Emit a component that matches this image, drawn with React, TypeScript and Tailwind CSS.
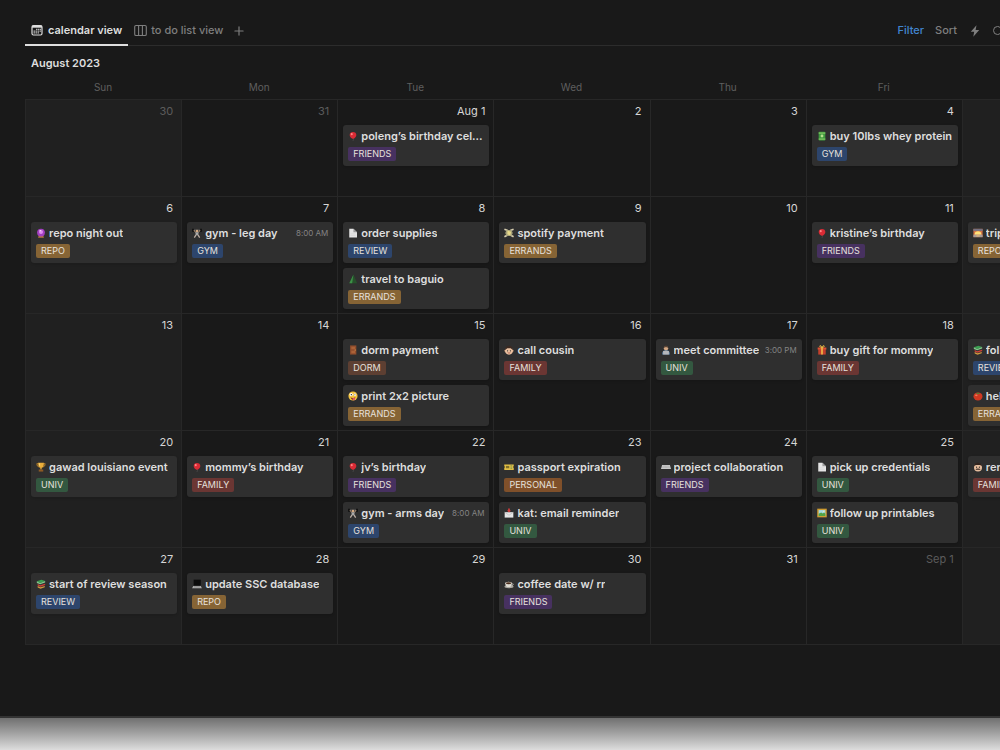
import React from "react";
import { Plus, Search } from "lucide-react";

type Tag =
  | "FRIENDS"
  | "GYM"
  | "REPO"
  | "REVIEW"
  | "ERRANDS"
  | "DORM"
  | "FAMILY"
  | "UNIV"
  | "PERSONAL";

interface CalendarEvent {
  icon: string;
  title: string;
  tag: Tag;
  time?: string;
}

interface Day {
  label: string;
  muted?: boolean;
  events?: CalendarEvent[];
}

const tagColors: Record<Tag, string> = {
  FRIENDS: "bg-[#473160]",
  GYM: "bg-[#2d456c]",
  REPO: "bg-[#866435]",
  REVIEW: "bg-[#2d456c]",
  ERRANDS: "bg-[#866435]",
  DORM: "bg-[#5d3f32]",
  FAMILY: "bg-[#6b3633]",
  UNIV: "bg-[#335840]",
  PERSONAL: "bg-[#80502a]",
};

const icons: Record<string, React.ReactNode> = {
  balloon: (
    <>
      <path d="M6 8.500q1 1.500 0 3.500" stroke="#666" strokeWidth=".5" fill="none" />
      <path d="M6 1.200c-2.500 0-4 1.600-4 3.600C2 7 4 8.800 5.700 9.300h.8C8.200 8.600 10 6.800 10 4.800 10 2.600 8.400 1.200 6 1.200z" fill="#d92b35" />
      <ellipse cx="4.500" cy="3.800" rx="1.200" ry="1.300" fill="#ff8585" />
    </>
  ),
  whey: (
    <>
      <rect x="2" y=".8" width="8" height="10.700" rx="1" fill="#3f9a3f" />
      <path d="M2 2.500h8M2 9.700h8" stroke="#8fd06c" strokeWidth="1.200" />
      <circle cx="6" cy="6" r="1.700" fill="#b6e08c" />
    </>
  ),
  crystal: (
    <>
      <path d="M2.500 11.700l1-3.200h5l1 3.200z" fill="#b7793c" />
      <circle cx="6" cy="5.500" r="4.700" fill="#a13fc0" />
      <circle cx="6" cy="4.800" r="2.400" fill="#dd8df0" />
      <circle cx="5" cy="3.200" r=".8" fill="#fff" />
    </>
  ),
  lifter: (
    <>
      <path d="M1 2.500h10" stroke="#777" strokeWidth=".8" />
      <path d="M1.200.8v3.700M10.800.8v3.700" stroke="#0c0c0c" strokeWidth="2" />
      <path d="M2.300 2.500l2.200 3M9.700 2.500l-2.200 3" stroke="#b89678" strokeWidth="1.200" />
      <circle cx="6" cy="3.500" r="1.500" fill="#d6ab83" />
      <path d="M4.100 5h3.800l-.4 3.700h-3z" fill="#a9a9a9" />
      <path d="M4.800 8.300L2.800 11.500M7.200 8.300l2 3.200" stroke="#bcaea4" strokeWidth="1.500" />
    </>
  ),
  page: (
    <>
      <path d="M1.500.8h5L10.800 5v6.500H1.500z" fill="#e4e4e4" />
      <path d="M6.500.8V5h4.300z" fill="#9c9c9c" />
      <path d="M3 7h6M3 9h6" stroke="#d4d4d4" strokeWidth=".7" />
    </>
  ),
  tree: (
    <>
      <path d="M6.500.5L11 11H2.500z" fill="#26502b" />
      <path d="M6.500.5L5 11H1.500z" fill="#3c9146" />
    </>
  ),
  money: (
    <>
      <path d="M.5 1.500l4 1.500M11.500 1.500l-4 1.500M.5 10.500l4-2M11.500 10.500l-4-2" stroke="#d8cfb0" strokeWidth="2" />
      <path d="M3 2.500h6l1.500 3.500L9 9.500H3L1.500 6z" fill="#a8a37a" />
      <path d="M4.200 3l4.300 1.500L7.500 9 4 7.500z" fill="#e8d989" />
    </>
  ),
  sunrise: (
    <>
      <rect x=".5" y="1" width="11" height="10" fill="#d57246" />
      <path d="M.5 3.500V1h11v2.500z" fill="#767282" />
      <path d="M2 8a4 4 0 018 0z" fill="#ffe277" />
      <path d="M.5 8h11v3H.5z" fill="#a79b98" />
      <path d="M4 9.500h4" stroke="#ffc260" />
    </>
  ),
  door: (
    <>
      <rect x="2.500" y=".5" width="7.500" height="11" fill="#904d2c" />
      <path d="M4 2h4.500v3H4zM4 7h4.500v3H4z" fill="#ab6238" />
      <circle cx="8.600" cy="6.100" r=".6" fill="#e9bd62" />
    </>
  ),
  zany: (
    <>
      <circle cx="6" cy="6" r="5.500" fill="#f4c33d" />
      <circle cx="3.800" cy="4.300" r="1.900" fill="#fff" />
      <circle cx="8.300" cy="4.600" r="1.500" fill="#fff" />
      <circle cx="4" cy="4.400" r=".8" fill="#222" />
      <circle cx="8.300" cy="4.600" r=".6" fill="#222" />
      <path d="M3 7.500q3 2 6-.3-.4 3.300-2.700 3.600T3 7.500z" fill="#8b3e19" />
      <path d="M5.500 8.800l2.500-.5.500 2.300-2 .8z" fill="#e9557a" />
    </>
  ),
  kid: (
    <>
      <circle cx="1.800" cy="7" r="1.300" fill="#dca682" />
      <circle cx="10.200" cy="7" r="1.300" fill="#dca682" />
      <circle cx="6" cy="7" r="4.600" fill="#ebc1a0" />
      <path d="M1.300 6C1.300 2.500 3.500 1 6 1s4.700 1.500 4.700 5L8 4H4z" fill="#3b2a22" />
      <circle cx="4.300" cy="7" r=".7" fill="#222" />
      <circle cx="7.700" cy="7" r=".7" fill="#222" />
      <path d="M4.500 9.200q1.500 1.200 3 0" stroke="#a84c3f" strokeWidth=".9" fill="none" />
    </>
  ),
  mustache: (
    <>
      <circle cx="6" cy="6.700" r="4.800" fill="#e5bd9e" />
      <path d="M1.300 5.200C1.400 2 3.700.8 6 .8S10.600 2 10.700 5.200L8.500 3.500h-5z" fill="#31241e" />
      <circle cx="4.300" cy="6.200" r=".7" fill="#222" />
      <circle cx="7.700" cy="6.200" r=".7" fill="#222" />
      <path d="M3 9.400Q4.500 7.200 6 8.200q1.500-1 3 1.200z" fill="#382720" />
    </>
  ),
  office: (
    <>
      <path d="M1.200 11.500c0-4 2-5.500 4.800-5.500s4.800 1.500 4.800 5.500z" fill="#587da0" />
      <circle cx="6" cy="4" r="2.600" fill="#d4a884" />
      <path d="M3.200 4C3.200 1.500 4.500 1 6 1s2.800.5 2.800 3L7.500 2.800h-3z" fill="#5a4334" />
      <rect x="2.500" y="7.200" width="7" height="4.300" fill="#b5b7bb" />
    </>
  ),
  gift: (
    <>
      <rect x="1.500" y="5" width="9" height="6.500" fill="#c4402b" />
      <rect x=".8" y="3" width="10.400" height="2.500" fill="#df5132" />
      <path d="M5 3h2v8.500H5z" fill="#edba47" />
      <path d="M6 3C3.500 3 2.500.8 4 .8S6 3 6 3s.5-2.200 2-2.200S8.500 3 6 3z" fill="none" stroke="#edba47" strokeWidth="1.200" />
    </>
  ),
  books: (
    <>
      <path d="M1 2.800L6.500 1l4.500 1.500-6 2.300z" fill="#3ba052" />
      <path d="M1 2.800v2l4 1.500 6-2V2.500L5 4.800z" fill="#85c78d" />
      <path d="M2 6l3 1.500L11 5.700v1.500L5.500 9.200 2 7.700z" fill="#cf4138" />
      <path d="M2 8.500l3.500 1.500L10.500 8.500V10l-5 1.700L2 10.200z" fill="#cf983e" />
    </>
  ),
  tomato: (
    <>
      <ellipse cx="6" cy="6.500" rx="5.400" ry="4.800" fill="#cf3922" />
      <ellipse cx="4" cy="5.200" rx="1.600" ry="1" fill="#f17b59" />
      <path d="M3.500 2.500l1.700.2L6 1.500l.8 1.200 1.700-.2-1.200 1.500L6 3.600l-1.300.4z" fill="#4c8436" />
    </>
  ),
  trophy: (
    <>
      <path d="M2.500 2H1q0 3.500 2.500 4M9.500 2H11q0 3.500-2.500 4" stroke="#cb8c27" fill="none" />
      <path d="M2.500.8h7Q9.500 6.500 6.800 7v2H5.200V7Q2.500 6.500 2.500.8z" fill="#e9ad3a" />
      <rect x="3.300" y="9" width="5.400" height="2.500" fill="#8c5924" />
      <path d="M4.300 1.500v3" stroke="#ffe290" />
    </>
  ),
  ticket: (
    <>
      <path d="M.3 3h11.400v2.200a.8.800 0 000 1.600V9.500H.3V6.800a.8.800 0 000-1.600z" fill="#e2bf45" />
      <path d="M2.300 4.700h4v2.800h-4z" fill="#7e6e29" />
      <path d="M7.800 4.500h2M7.800 6.200h2M7.800 7.900h2" stroke="#5f8c57" strokeWidth=".8" />
    </>
  ),
  mail: (
    <>
      <path d="M.8 5h10.400v6.500H.8z" fill="#e6e6e6" />
      <path d="M.8 5L6 8.700 11.200 5" stroke="#b5b5b5" strokeWidth=".7" fill="none" />
      <path d="M5 .5h2v2.500h1.500L6 5.500 3.500 3H5z" fill="#d93c3c" />
    </>
  ),
  keyboard: (
    <>
      <path d="M1.300 3.500h9.400l1.300 5H0z" fill="#c9c9c9" />
      <path d="M2 5h8M1.700 6.500h8.600" stroke="#9a9a9a" strokeWidth=".7" strokeDasharray="1 .5" />
    </>
  ),
  frame: (
    <>
      <rect x=".3" y=".8" width="11.400" height="10.400" fill="#cf9d32" />
      <rect x="2" y="2.500" width="8" height="7" fill="#a5d9e3" />
      <path d="M2 9.500V7l3-1.500 2 1L8.500 5.500 10 7v2.500z" fill="#50a345" />
      <circle cx="8" cy="4" r=".8" fill="#fff3a8" />
    </>
  ),
  laptop: (
    <>
      <path d="M2 .8h8.500v7H2z" fill="#0b0b0b" />
      <path d="M1.500 8.500h9l1.300 2.700H.2z" fill="#b9b9b9" />
      <path d="M2 9.500h8" stroke="#555" strokeWidth=".7" />
    </>
  ),
  coffee: (
    <>
      <ellipse cx="6" cy="9.300" rx="5.500" ry="1.700" fill="#a9a69f" />
      <path d="M1.500 5.200h8q0 3.800-2.500 4.500H4Q1.500 9 1.500 5.200z" fill="#dedbd3" />
      <path d="M9.500 5.700q2.200-.2 1.500 1.300-.6 1-2 1" stroke="#dedbd3" fill="none" strokeWidth=".8" />
      <ellipse cx="5.500" cy="5" rx="4" ry="1.800" fill="#dedbd3" />
      <ellipse cx="5.500" cy="5.100" rx="3.200" ry="1.200" fill="#4b2d1c" />
    </>
  ),
};

const weekdays = ["Sun", "Mon", "Tue", "Wed", "Thu", "Fri", "Sat"];

const weeks: Day[][] = [
  [
    { label: "30", muted: true },
    { label: "31", muted: true },
    {
      label: "Aug 1",
      events: [{ icon: "balloon", title: "poleng’s birthday celebration", tag: "FRIENDS" }],
    },
    { label: "2" },
    { label: "3" },
    { label: "4", events: [{ icon: "whey", title: "buy 10lbs whey protein", tag: "GYM" }] },
    { label: "5" },
  ],
  [
    { label: "6", events: [{ icon: "crystal", title: "repo night out", tag: "REPO" }] },
    {
      label: "7",
      events: [{ icon: "lifter", title: "gym - leg day", tag: "GYM", time: "8:00 AM" }],
    },
    {
      label: "8",
      events: [
        { icon: "page", title: "order supplies", tag: "REVIEW" },
        { icon: "tree", title: "travel to baguio", tag: "ERRANDS" },
      ],
    },
    { label: "9", events: [{ icon: "money", title: "spotify payment", tag: "ERRANDS" }] },
    { label: "10" },
    { label: "11", events: [{ icon: "balloon", title: "kristine’s birthday", tag: "FRIENDS" }] },
    { label: "12", events: [{ icon: "sunrise", title: "trip", tag: "REPO" }] },
  ],
  [
    { label: "13" },
    { label: "14" },
    {
      label: "15",
      events: [
        { icon: "door", title: "dorm payment", tag: "DORM" },
        { icon: "zany", title: "print 2x2 picture", tag: "ERRANDS" },
      ],
    },
    { label: "16", events: [{ icon: "kid", title: "call cousin", tag: "FAMILY" }] },
    {
      label: "17",
      events: [{ icon: "office", title: "meet committee", tag: "UNIV", time: "3:00 PM" }],
    },
    { label: "18", events: [{ icon: "gift", title: "buy gift for mommy", tag: "FAMILY" }] },
    {
      label: "19",
      events: [
        { icon: "books", title: "follow up", tag: "REVIEW" },
        { icon: "tomato", title: "help", tag: "ERRANDS" },
      ],
    },
  ],
  [
    { label: "20", events: [{ icon: "trophy", title: "gawad louisiano event", tag: "UNIV" }] },
    { label: "21", events: [{ icon: "balloon", title: "mommy’s birthday", tag: "FAMILY" }] },
    {
      label: "22",
      events: [
        { icon: "balloon", title: "jv’s birthday", tag: "FRIENDS" },
        { icon: "lifter", title: "gym - arms day", tag: "GYM", time: "8:00 AM" },
      ],
    },
    {
      label: "23",
      events: [
        { icon: "ticket", title: "passport expiration", tag: "PERSONAL" },
        { icon: "mail", title: "kat: email reminder", tag: "UNIV" },
      ],
    },
    { label: "24", events: [{ icon: "keyboard", title: "project collaboration", tag: "FRIENDS" }] },
    {
      label: "25",
      events: [
        { icon: "page", title: "pick up credentials", tag: "UNIV" },
        { icon: "frame", title: "follow up printables", tag: "UNIV" },
      ],
    },
    { label: "26", events: [{ icon: "mustache", title: "rent", tag: "FAMILY" }] },
  ],
  [
    { label: "27", events: [{ icon: "books", title: "start of review season", tag: "REVIEW" }] },
    { label: "28", events: [{ icon: "laptop", title: "update SSC database", tag: "REPO" }] },
    { label: "29" },
    { label: "30", events: [{ icon: "coffee", title: "coffee date w/ rr", tag: "FRIENDS" }] },
    { label: "31" },
    { label: "Sep 1", muted: true },
    { label: "2", muted: true },
  ],
];

const EventCard: React.FC<{ event: CalendarEvent }> = ({ event }) => (
  <article className="h-[41px] rounded-[3px] bg-[#2f2f2f] px-[5px] pt-[3px] shadow-sm">
    <div className="flex h-4 items-center">
      <svg className="mr-[3px] size-[10px] shrink-0" viewBox="0 0 12 12">
        {icons[event.icon]}
      </svg>
      <h3 className="truncate text-[11px] leading-4 font-semibold text-[#dedede]">{event.title}</h3>
      {event.time && (
        <time className="ml-auto shrink-0 text-[8px] text-[#848484]">{event.time}</time>
      )}
    </div>
    <span
      className={`mt-[3px] block h-[14px] w-fit rounded-[2px] px-[5px] text-[9px] leading-[14px] text-[#e6e1dd] ${tagColors[event.tag]}`}
    >
      {event.tag}
    </span>
  </article>
);

const DayCell: React.FC<{ day: Day; weekend: boolean }> = ({ day, weekend }) => (
  <div
    className={`min-h-[97px] min-w-0 border-t border-l border-[#272727] pr-1 pb-1 pl-[5px] ${
      weekend ? "bg-[#202020]" : ""
    }`}
  >
    <div
      className={`h-[25px] pr-1 text-right text-[11px] leading-[23px] ${
        day.muted ? "text-[#5c5c5c]" : "text-[#d6d6d6]"
      }`}
    >
      {day.label}
    </div>
    <div className="flex flex-col gap-[5px]">
      {day.events?.map((event) => (
        <EventCard key={event.title} event={event} />
      ))}
    </div>
  </div>
);

export default function App() {
  return (
    <div className="flex min-h-screen flex-col overflow-hidden bg-[#191919] font-['Inter',sans-serif] text-[#d6d6d6] [font-feature-settings:'calt'_0]">
      <main className="flex-1 pt-4 pl-[25px]">
        <nav className="flex h-[30px] items-stretch border-b border-[#2c2c2c] text-[11px] font-medium text-[#7f7f7f]">
          <button className="-mb-px flex items-center gap-[5px] border-b-2 border-[#dedede] px-[6px] font-semibold text-[#dedede]">
            <svg className="size-[12px]" viewBox="0 0 12 12" fill="none" stroke="currentColor">
              <rect x="1" y="1.500" width="10" height="9.500" rx="1.500" strokeWidth="1.200" />
              <path d="M1 2.700h10" strokeWidth="2" />
              <path d="M5 5.300h5M2.500 7.100h7.500M2.500 8.900h5.500" strokeWidth="1" strokeDasharray="1.500 .5" />
            </svg>
            calendar view
          </button>
          <button className="ml-[6px] flex items-center gap-1">
            <svg className="size-[13px]" viewBox="0 0 13 13" fill="none" stroke="currentColor">
              <rect x=".7" y="1.500" width="11.600" height="10" rx="1.300" strokeWidth="1.100" />
              <path d="M4.600 1.500v10M8.400 1.500v10" strokeWidth="1.100" />
            </svg>
            to do list view
          </button>
          <button className="ml-[9px] flex items-center" aria-label="Add view">
            <Plus size={14} strokeWidth={2} />
          </button>
          <div className="-mr-1 ml-auto flex shrink-0 items-center">
            <button className="text-[#4285d0]">Filter</button>
            <button className="ml-[11px]">Sort</button>
            <button className="ml-3" aria-label="Automations">
              <svg className="size-[12px]" viewBox="0 0 12 12" fill="currentColor">
                <path d="M7.500.3L1.800 6.800h3.400L4.300 11.700 10.200 5H6.600z" />
              </svg>
            </button>
            <button className="ml-[11px]" aria-label="Search">
              <Search size={12} strokeWidth={2} />
            </button>
          </div>
        </nav>

        <h1 className="px-[6px] pt-2 text-[11px] leading-[18px] font-semibold text-[#dedede]">August 2023</h1>

        <section className="w-[calc(100%+118px)] pt-[7px]">
          <div className="grid h-5 grid-cols-7 text-center text-[10px] leading-4 text-[#5f5f5f]">
            {weekdays.map((name) => (
              <div key={name}>{name}</div>
            ))}
          </div>
          <div className="grid grid-cols-7 border-b border-[#272727]">
            {weeks.flat().map((day, index) => (
              <DayCell key={index} day={day} weekend={index % 7 === 0 || index % 7 === 6} />
            ))}
          </div>
        </section>
      </main>
      <footer className="h-[34px] border-t-2 border-[#333333] bg-linear-to-b from-[#707070] to-[#dddddd]" />
    </div>
  );
}
